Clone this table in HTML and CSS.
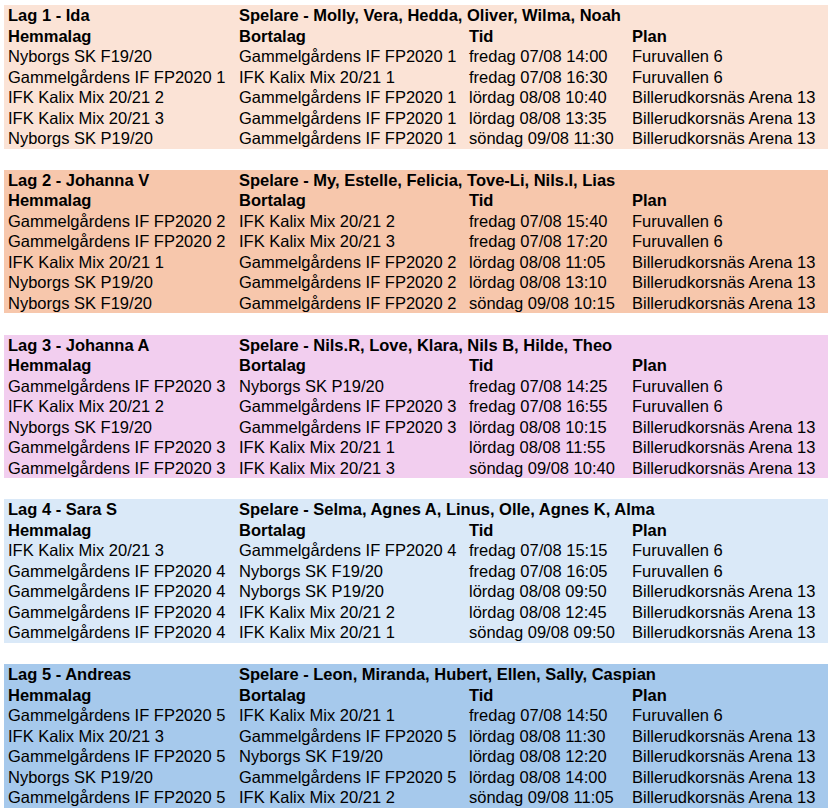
FILE: index.html
```html
<!DOCTYPE html>
<html lang="sv">
<head>
<meta charset="utf-8">
<title>Lag och matcher</title>
<link rel="stylesheet" href="styles.css">
</head>
<body>
<div class="page">
  <section class="team team-1">
    <div class="row head"><div class="c">Lag 1 - Ida</div><div class="c span">Spelare - Molly, Vera, Hedda, Oliver, Wilma, Noah</div></div>
    <div class="row head"><div class="c">Hemmalag</div><div class="c">Bortalag</div><div class="c">Tid</div><div class="c">Plan</div></div>
    <div class="row"><div class="c">Nyborgs SK F19/20</div><div class="c">Gammelgårdens IF FP2020 1</div><div class="c">fredag 07/08 14:00</div><div class="c">Furuvallen 6</div></div>
    <div class="row"><div class="c">Gammelgårdens IF FP2020 1</div><div class="c">IFK Kalix Mix 20/21 1</div><div class="c">fredag 07/08 16:30</div><div class="c">Furuvallen 6</div></div>
    <div class="row"><div class="c">IFK Kalix Mix 20/21 2</div><div class="c">Gammelgårdens IF FP2020 1</div><div class="c">lördag 08/08 10:40</div><div class="c">Billerudkorsnäs Arena 13</div></div>
    <div class="row"><div class="c">IFK Kalix Mix 20/21 3</div><div class="c">Gammelgårdens IF FP2020 1</div><div class="c">lördag 08/08 13:35</div><div class="c">Billerudkorsnäs Arena 13</div></div>
    <div class="row"><div class="c">Nyborgs SK P19/20</div><div class="c">Gammelgårdens IF FP2020 1</div><div class="c">söndag 09/08 11:30</div><div class="c">Billerudkorsnäs Arena 13</div></div>
  </section>
  <section class="team team-2">
    <div class="row head"><div class="c">Lag 2 - Johanna V</div><div class="c span">Spelare - My, Estelle, Felicia, Tove-Li, Nils.I, Lias</div></div>
    <div class="row head"><div class="c">Hemmalag</div><div class="c">Bortalag</div><div class="c">Tid</div><div class="c">Plan</div></div>
    <div class="row"><div class="c">Gammelgårdens IF FP2020 2</div><div class="c">IFK Kalix Mix 20/21 2</div><div class="c">fredag 07/08 15:40</div><div class="c">Furuvallen 6</div></div>
    <div class="row"><div class="c">Gammelgårdens IF FP2020 2</div><div class="c">IFK Kalix Mix 20/21 3</div><div class="c">fredag 07/08 17:20</div><div class="c">Furuvallen 6</div></div>
    <div class="row"><div class="c">IFK Kalix Mix 20/21 1</div><div class="c">Gammelgårdens IF FP2020 2</div><div class="c">lördag 08/08 11:05</div><div class="c">Billerudkorsnäs Arena 13</div></div>
    <div class="row"><div class="c">Nyborgs SK P19/20</div><div class="c">Gammelgårdens IF FP2020 2</div><div class="c">lördag 08/08 13:10</div><div class="c">Billerudkorsnäs Arena 13</div></div>
    <div class="row"><div class="c">Nyborgs SK F19/20</div><div class="c">Gammelgårdens IF FP2020 2</div><div class="c">söndag 09/08 10:15</div><div class="c">Billerudkorsnäs Arena 13</div></div>
  </section>
  <section class="team team-3">
    <div class="row head"><div class="c">Lag 3 - Johanna A</div><div class="c span">Spelare - Nils.R, Love, Klara, Nils B, Hilde, Theo</div></div>
    <div class="row head"><div class="c">Hemmalag</div><div class="c">Bortalag</div><div class="c">Tid</div><div class="c">Plan</div></div>
    <div class="row"><div class="c">Gammelgårdens IF FP2020 3</div><div class="c">Nyborgs SK P19/20</div><div class="c">fredag 07/08 14:25</div><div class="c">Furuvallen 6</div></div>
    <div class="row"><div class="c">IFK Kalix Mix 20/21 2</div><div class="c">Gammelgårdens IF FP2020 3</div><div class="c">fredag 07/08 16:55</div><div class="c">Furuvallen 6</div></div>
    <div class="row"><div class="c">Nyborgs SK F19/20</div><div class="c">Gammelgårdens IF FP2020 3</div><div class="c">lördag 08/08 10:15</div><div class="c">Billerudkorsnäs Arena 13</div></div>
    <div class="row"><div class="c">Gammelgårdens IF FP2020 3</div><div class="c">IFK Kalix Mix 20/21 1</div><div class="c">lördag 08/08 11:55</div><div class="c">Billerudkorsnäs Arena 13</div></div>
    <div class="row"><div class="c">Gammelgårdens IF FP2020 3</div><div class="c">IFK Kalix Mix 20/21 3</div><div class="c">söndag 09/08 10:40</div><div class="c">Billerudkorsnäs Arena 13</div></div>
  </section>
  <section class="team team-4">
    <div class="row head"><div class="c">Lag 4 - Sara S</div><div class="c span">Spelare - Selma, Agnes A, Linus, Olle, Agnes K, Alma</div></div>
    <div class="row head"><div class="c">Hemmalag</div><div class="c">Bortalag</div><div class="c">Tid</div><div class="c">Plan</div></div>
    <div class="row"><div class="c">IFK Kalix Mix 20/21 3</div><div class="c">Gammelgårdens IF FP2020 4</div><div class="c">fredag 07/08 15:15</div><div class="c">Furuvallen 6</div></div>
    <div class="row"><div class="c">Gammelgårdens IF FP2020 4</div><div class="c">Nyborgs SK F19/20</div><div class="c">fredag 07/08 16:05</div><div class="c">Furuvallen 6</div></div>
    <div class="row"><div class="c">Gammelgårdens IF FP2020 4</div><div class="c">Nyborgs SK P19/20</div><div class="c">lördag 08/08 09:50</div><div class="c">Billerudkorsnäs Arena 13</div></div>
    <div class="row"><div class="c">Gammelgårdens IF FP2020 4</div><div class="c">IFK Kalix Mix 20/21 2</div><div class="c">lördag 08/08 12:45</div><div class="c">Billerudkorsnäs Arena 13</div></div>
    <div class="row"><div class="c">Gammelgårdens IF FP2020 4</div><div class="c">IFK Kalix Mix 20/21 1</div><div class="c">söndag 09/08 09:50</div><div class="c">Billerudkorsnäs Arena 13</div></div>
  </section>
  <section class="team team-5">
    <div class="row head"><div class="c">Lag 5 - Andreas</div><div class="c span">Spelare - Leon, Miranda, Hubert, Ellen, Sally, Caspian</div></div>
    <div class="row head"><div class="c">Hemmalag</div><div class="c">Bortalag</div><div class="c">Tid</div><div class="c">Plan</div></div>
    <div class="row"><div class="c">Gammelgårdens IF FP2020 5</div><div class="c">IFK Kalix Mix 20/21 1</div><div class="c">fredag 07/08 14:50</div><div class="c">Furuvallen 6</div></div>
    <div class="row"><div class="c">IFK Kalix Mix 20/21 3</div><div class="c">Gammelgårdens IF FP2020 5</div><div class="c">lördag 08/08 11:30</div><div class="c">Billerudkorsnäs Arena 13</div></div>
    <div class="row"><div class="c">Gammelgårdens IF FP2020 5</div><div class="c">Nyborgs SK F19/20</div><div class="c">lördag 08/08 12:20</div><div class="c">Billerudkorsnäs Arena 13</div></div>
    <div class="row"><div class="c">Nyborgs SK P19/20</div><div class="c">Gammelgårdens IF FP2020 5</div><div class="c">lördag 08/08 14:00</div><div class="c">Billerudkorsnäs Arena 13</div></div>
    <div class="row"><div class="c">Gammelgårdens IF FP2020 5</div><div class="c">IFK Kalix Mix 20/21 2</div><div class="c">söndag 09/08 11:05</div><div class="c">Billerudkorsnäs Arena 13</div></div>
  </section>
</div>
</body>
</html>
```
FILE: styles.css
```css
html, body {
  margin: 0;
  padding: 0;
  background: #ffffff;
}
body {
  font-family: "Liberation Sans", Arial, sans-serif;
  font-size: 16.5px;
  color: #000000;
}
.page {
  display: flex;
  flex-direction: column;
  gap: 21.25px;
  padding: 5px 4px 0 4px;
  width: 824px;
}
.team {
  display: flex;
  flex-direction: column;
}
.team-1 { background: #fbe3d6; }
.team-2 { background: #f7c7ac; }
.team-3 { background: #f2ceef; }
.team-4 { background: #dae9f8; }
.team-5 { background: #a6c9ec; }
.row {
  display: grid;
  grid-template-columns: 231px 230px 163px 200px;
  height: 20.5px;
  line-height: 20.5px;
}
.c {
  padding-left: 4px;
  white-space: nowrap;
}
.head .c {
  font-weight: bold;
}
.span {
  grid-column: 2 / 5;
}
```
